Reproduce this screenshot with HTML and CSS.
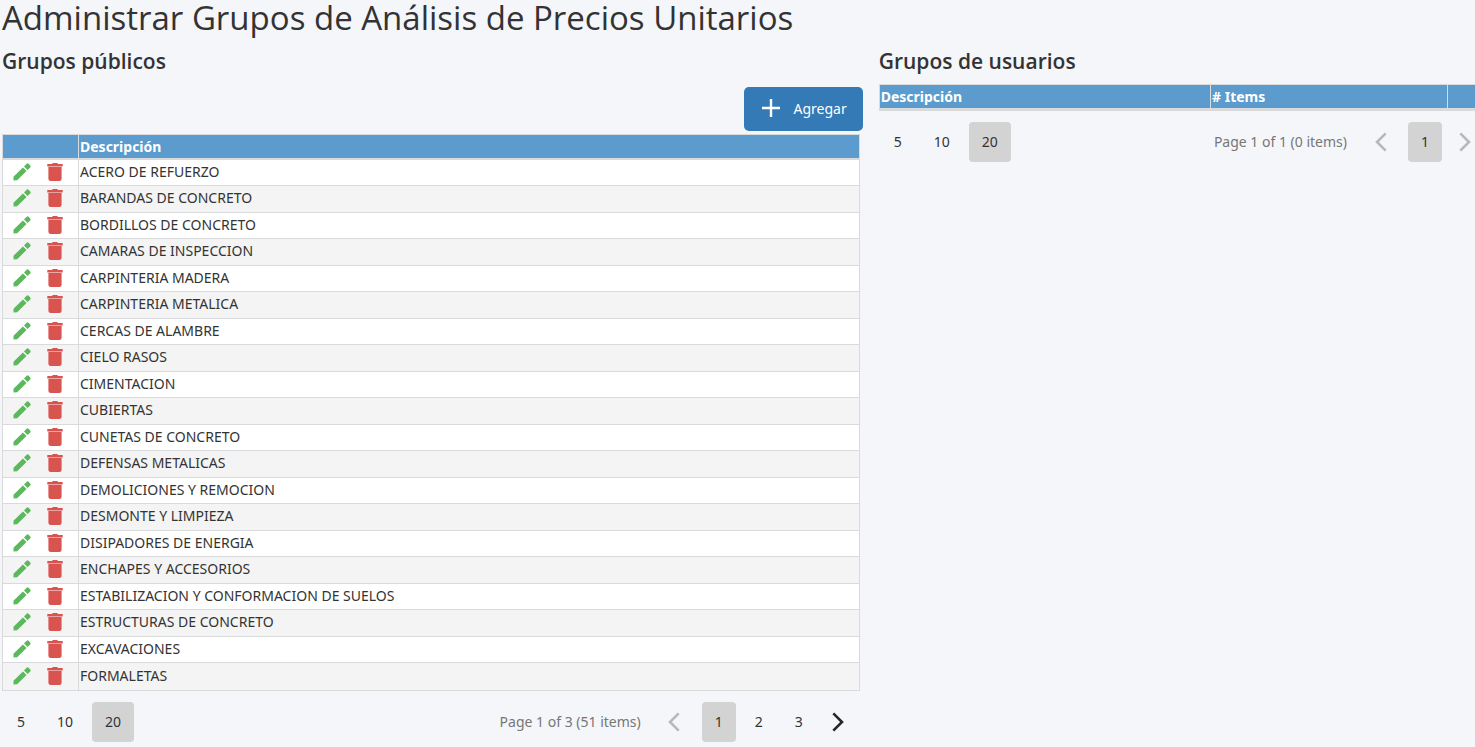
FILE: index.html
```html
<!DOCTYPE html>
<html lang="es">
<head>
  <meta charset="UTF-8" />
  <meta name="viewport" content="width=device-width, initial-scale=1.0" />
  <title>Administrar Grupos de Análisis de Precios Unitarios</title>
  <link rel="stylesheet" href="styles.css">
</head>
<body>
  <svg class="sprite" aria-hidden="true">
    <symbol id="icon-pencil" viewBox="0 0 18 18">
      <path d="M0.5 17.5V13.8L9.9 4.6 13.5 8.1 4.2 17.2Z" />
      <path d="M11 3.5 13.6.8Q14.6-.1 15.6.8L17.2 2.4Q18.1 3.4 17.2 4.4L14.6 7Z" />
    </symbol>
    <symbol id="icon-trash" viewBox="0 0 16 18">
      <path d="M0.3 1H5L5.8 0H10.2L11 1H15.7V3.4H0.3Z" />
      <path d="M1.4 4H14.6V15.5Q14.6 18 12.1 18H3.9Q1.4 18 1.4 15.5Z" />
    </symbol>
    <symbol id="icon-prev" viewBox="0 0 12 20">
      <path d="M10.7 1.3 2 10 10.7 18.7" />
    </symbol>
    <symbol id="icon-next" viewBox="0 0 12 20">
      <path d="M1.3 1.3 10 10 1.3 18.7" />
    </symbol>
  </svg>

  <h1>Administrar Grupos de Análisis de Precios Unitarios</h1>

  <div class="row">
    <section class="col">
      <h2>Grupos públicos</h2>
      <div class="toolbar">
        <button class="btn-add" type="button">
          <svg viewBox="0 0 20 20" aria-hidden="true"><path d="M10 1V19M1 10H19" /></svg>
          <span>Agregar</span>
        </button>
      </div>
      <div class="panel">
        <table class="grid">
          <thead>
            <tr><th class="col-actions"></th><th>Descripción</th></tr>
          </thead>
          <tbody id="groups"></tbody>
        </table>
        <nav class="pager">
          <button type="button">5</button>
          <button type="button">10</button>
          <button type="button" class="selected">20</button>
          <span class="info">Page 1 of 3 (51 items)</span>
          <button type="button" class="arrow prev" aria-label="Anterior" disabled><svg><use href="#icon-prev" /></svg></button>
          <button type="button" class="page selected">1</button>
          <button type="button" class="page">2</button>
          <button type="button" class="page">3</button>
          <button type="button" class="arrow" aria-label="Siguiente"><svg><use href="#icon-next" /></svg></button>
        </nav>
      </div>
    </section>

    <section class="col">
      <h2>Grupos de usuarios</h2>
      <table class="grid">
        <thead>
          <tr><th>Descripción</th><th class="col-items"># Items</th><th class="col-last"></th></tr>
        </thead>
      </table>
      <nav class="pager">
        <button type="button">5</button>
        <button type="button">10</button>
        <button type="button" class="selected">20</button>
        <span class="info">Page 1 of 1 (0 items)</span>
        <button type="button" class="arrow prev" aria-label="Anterior" disabled><svg><use href="#icon-prev" /></svg></button>
        <button type="button" class="page selected">1</button>
        <button type="button" class="arrow" aria-label="Siguiente" disabled><svg><use href="#icon-next" /></svg></button>
      </nav>
    </section>
  </div>

  <script src="script.js"></script>
</body>
</html>
```
FILE: styles.css
```css
body {
  margin: 0;
  padding: 0 0 0 2px;
  font-family: "Segoe UI", "Noto Sans", "Open Sans", sans-serif;
  font-size: 14px;
  color: #333;
  background-color: #f4f6fa;
  overflow-x: hidden;
}
.sprite {
  display: none;
}
h1,
h2 {
  margin: 0;
  font-family: "Segoe UI", "Open Sans", sans-serif;
}
h1 {
  font-size: 33px;
  font-weight: 400;
  line-height: 36px;
  white-space: nowrap;
}
h2 {
  padding: 11px 0 9px;
  font-size: 21px;
  font-weight: 600;
  line-height: 28px;
}
.row {
  display: grid;
  grid-template-columns: 58% 1fr;
  gap: 16px;
  margin-right: -11px;
}
.toolbar {
  display: flex;
  justify-content: flex-end;
  padding: 3px 0;
}
.btn-add {
  display: flex;
  align-items: center;
  gap: 12px;
  height: 44px;
  padding: 0 16px 2px;
  border: 0;
  border-radius: 5px;
  background-color: #337ab7;
  color: #fff;
  font-family: inherit;
  font-size: 14px;
}
.btn-add svg {
  width: 22px;
  height: 20px;
  fill: none;
  stroke: #fff;
  stroke-width: 2.4;
}
.panel {
  margin-right: 3px;
}
.grid {
  width: 100%;
  table-layout: fixed;
  border-collapse: separate;
  border-spacing: 0;
  border: 1px solid #d9dadc;
  background-color: #fff;
}
.grid th,
.grid td {
  box-sizing: border-box;
  padding: 0 1px;
  line-height: 20px;
  text-align: left;
  white-space: nowrap;
}
.grid th {
  height: 25px;
  background-color: #5b9bcd;
  border-bottom: 2px solid #d9dadc;
  color: #fff;
  font-weight: 700;
}
.grid th + th,
.grid td + td {
  border-left: 1px solid #d9dadc;
}
.grid td {
  height: 26px;
  padding-bottom: 2px;
  border-bottom: 1px solid #d9dadc;
}
.grid tr:nth-child(even) td {
  height: 27px;
  background-color: #f4f4f4;
}
.grid tr:last-child td {
  border-bottom: 0;
}
.col-actions {
  width: 75px;
}
.col-items {
  width: 237px;
}
.col-last {
  width: 38px;
}
.actions {
  display: flex;
  align-items: center;
  gap: 15px;
  padding-left: 9px;
}
.actions button {
  display: flex;
  padding: 0;
  border: 0;
  background: none;
}
.actions svg {
  width: 18px;
  height: 18px;
}
.edit {
  fill: #5cb85c;
}
.delete {
  fill: #d9534f;
}
.pager {
  display: flex;
  align-items: center;
  gap: 6px;
  padding: 11px 5px 4px 2px;
}
.pager button {
  height: 40px;
  padding: 0 13px 2px;
  border: 0;
  border-radius: 4px;
  background: none;
  color: #333;
  font-family: inherit;
  font-size: 14px;
}
.pager .selected {
  background-color: #d3d3d3;
}
.pager .page {
  width: 34px;
  padding: 0 0 2px;
}
.pager .arrow {
  width: 33px;
  padding: 0;
}
.pager .prev {
  margin: 0 5px 0 11px;
}
.info {
  margin-left: auto;
  padding-bottom: 2px;
  color: #777;
}
.arrow svg {
  display: block;
  width: 12px;
  height: 20px;
  margin: 0 auto;
  fill: none;
  stroke: #262626;
  stroke-width: 2.6;
}
.arrow:disabled svg {
  stroke: #b7b8bb;
}
```
FILE: script.js
```js
const groups = [
  'ACERO DE REFUERZO',
  'BARANDAS DE CONCRETO',
  'BORDILLOS DE CONCRETO',
  'CAMARAS DE INSPECCION',
  'CARPINTERIA MADERA',
  'CARPINTERIA METALICA',
  'CERCAS DE ALAMBRE',
  'CIELO RASOS',
  'CIMENTACION',
  'CUBIERTAS',
  'CUNETAS DE CONCRETO',
  'DEFENSAS METALICAS',
  'DEMOLICIONES Y REMOCION',
  'DESMONTE Y LIMPIEZA',
  'DISIPADORES DE ENERGIA',
  'ENCHAPES Y ACCESORIOS',
  'ESTABILIZACION Y CONFORMACION DE SUELOS',
  'ESTRUCTURAS DE CONCRETO',
  'EXCAVACIONES',
  'FORMALETAS'
];

document.getElementById('groups').innerHTML = groups.map(name => `
  <tr>
    <td>
      <div class="actions">
        <button type="button" aria-label="Editar"><svg class="edit"><use href="#icon-pencil" /></svg></button>
        <button type="button" aria-label="Eliminar"><svg class="delete"><use href="#icon-trash" /></svg></button>
      </div>
    </td>
    <td>${name}</td>
  </tr>`).join('');
```
